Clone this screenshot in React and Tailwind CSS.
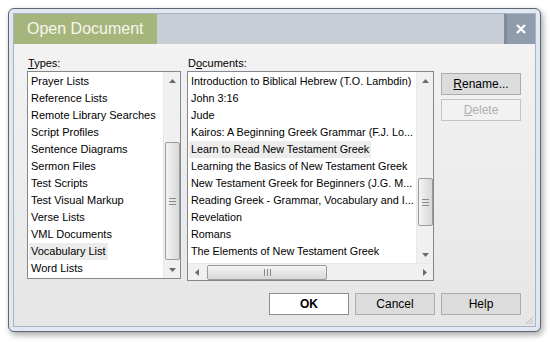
import React from 'react';

const types = [
  'Prayer Lists',
  'Reference Lists',
  'Remote Library Searches',
  'Script Profiles',
  'Sentence Diagrams',
  'Sermon Files',
  'Test Scripts',
  'Test Visual Markup',
  'Verse Lists',
  'VML Documents',
  'Vocabulary List',
  'Word Lists',
];

const documents = [
  'Introduction to Biblical Hebrew (T.O. Lambdin)',
  'John 3:16',
  'Jude',
  'Kairos: A Beginning Greek Grammar (F.J. Lo...',
  'Learn to Read New Testament Greek',
  'Learning the Basics of New Testament Greek',
  'New Testament Greek for Beginners (J.G. M...',
  'Reading Greek - Grammar, Vocabulary and I...',
  'Revelation',
  'Romans',
  'The Elements of New Testament Greek',
];

function Arrow({ dir }) {
  const pts = {
    up: '0,4 3.5,0 7,4',
    down: '0,0 3.5,4 7,0',
    left: '4,0 0,3.5 4,7',
    right: '0,0 4,3.5 0,7',
  }[dir];
  const horiz = dir === 'left' || dir === 'right';
  return (
    <svg width={horiz ? 4 : 7} height={horiz ? 7 : 4} viewBox={horiz ? '0 0 4 7' : '0 0 7 4'}>
      <polygon points={pts} fill="#6b6b6b" />
    </svg>
  );
}

function VScroll({ thumbTop, thumbHeight }) {
  return (
    <div className="relative w-[17px] h-full bg-[#f0f0f0] border-l border-[#e8e8e8] flex flex-col">
      <div className="h-[17px] flex items-center justify-center"><Arrow dir="up" /></div>
      <div className="flex-1" />
      <div className="h-[17px] flex items-center justify-center"><Arrow dir="down" /></div>
      <div
        className="absolute left-[1px] w-[15px] rounded-[2px] border border-[#9c9c9c] bg-gradient-to-r from-[#f4f4f4] to-[#d8d8d8] flex items-center justify-center"
        style={{ top: thumbTop, height: thumbHeight }}
      >
        <div className="flex flex-col gap-[2px]">
          <div className="w-[7px] h-px bg-[#8a8a8a]" />
          <div className="w-[7px] h-px bg-[#8a8a8a]" />
          <div className="w-[7px] h-px bg-[#8a8a8a]" />
        </div>
      </div>
    </div>
  );
}

function HScroll({ thumbLeft, thumbWidth }) {
  return (
    <div className="relative h-[17px] w-full bg-[#f0f0f0] border-t border-[#e8e8e8] flex">
      <div className="w-[17px] flex items-center justify-center"><Arrow dir="left" /></div>
      <div className="flex-1" />
      <div className="w-[17px] flex items-center justify-center"><Arrow dir="right" /></div>
      <div
        className="absolute top-[1px] h-[15px] rounded-[2px] border border-[#9c9c9c] bg-gradient-to-b from-[#f4f4f4] to-[#d8d8d8] flex items-center justify-center"
        style={{ left: thumbLeft, width: thumbWidth }}
      >
        <div className="flex gap-[2px]">
          <div className="w-px h-[7px] bg-[#8a8a8a]" />
          <div className="w-px h-[7px] bg-[#8a8a8a]" />
          <div className="w-px h-[7px] bg-[#8a8a8a]" />
        </div>
      </div>
    </div>
  );
}

function Row({ label, selected }) {
  return (
    <div className="h-[17px] flex items-center pl-[1px]">
      <span className={`px-[2px] leading-[17px] whitespace-nowrap ${selected ? 'bg-[#ececec]' : ''}`}>{label}</span>
    </div>
  );
}

function Button({ children, primary, disabled, className = '' }) {
  return (
    <div
      className={`h-[22px] w-[80px] flex items-center justify-center text-[12px] border ${
        primary
          ? 'bg-white border-[#8c8c8c] text-black'
          : disabled
          ? 'bg-[#f2f2f2] border-[#c4c4c4] text-[#b0b0b0]'
          : 'bg-[#dcdcdc] border-[#acacac] text-black'
      } ${className}`}
    >
      {children}
    </div>
  );
}

export default function App() {
  return (
    <div className="w-[550px] h-[342px] bg-white pl-[8px] pt-[8px] font-['Liberation_Sans',Arial,sans-serif]">
      <div className="w-[533px] h-[324px] rounded-[6px] border border-[#5e6670] bg-[#dfe8f3] p-[4px] shadow-[2px_3px_6px_rgba(0,0,0,0.35)]">
        <div className="relative w-full h-full border border-[#aab4c0] bg-gradient-to-b from-[#f4f4f4] to-[#e6e6e6] flex flex-col">
          {/* title bar */}
          <div className="h-[30px] flex bg-[#c8cdd6]">
            <div className="w-[143px] bg-[#a6b57c] flex items-center pl-[13px] text-[16px] whitespace-nowrap text-[#f6f6ee]">
              Open Document
            </div>
            <div className="flex-1" />
            <div className="w-[3px] bg-[#7f8b99]" />
            <div className="w-[28px] bg-[#8e9cac] flex items-center justify-center">
              <svg width="10" height="10" viewBox="0 0 10 10">
                <path d="M1 1L9 9M9 1L1 9" stroke="white" strokeWidth="2.2" />
              </svg>
            </div>
          </div>

          {/* body */}
          <div className="flex-1 flex flex-col pl-[13px] pt-[12px] text-[11px] text-black">
            <div className="flex">
              {/* types */}
              <div className="w-[154px] flex flex-col">
                <div className="h-[15px] pl-[1px] leading-[15px]"><span className="underline">T</span>ypes:</div>
                <div className="h-[208px] border border-[#828790] bg-white flex">
                  <div className="flex-1 pt-[1px] overflow-hidden">
                    {types.map((t) => (
                      <Row key={t} label={t} selected={t === 'Vocabulary List'} />
                    ))}
                  </div>
                  <VScroll thumbTop={70} thumbHeight={118} />
                </div>
              </div>

              {/* documents */}
              <div className="w-[247px] ml-[6px] flex flex-col">
                <div className="h-[15px] pl-[1px] leading-[15px]">D<span className="underline">o</span>cuments:</div>
                <div className="h-[210px] border border-[#828790] bg-white flex flex-col">
                  <div className="flex-1 flex min-h-0">
                    <div className="flex-1 pt-[1px] overflow-hidden text-[10.8px]">
                      {documents.map((d) => (
                        <Row key={d} label={d} selected={d === 'Learn to Read New Testament Greek'} />
                      ))}
                    </div>
                    <VScroll thumbTop={106} thumbHeight={48} />
                  </div>
                  <HScroll thumbLeft={19} thumbWidth={120} />
                </div>
              </div>

              {/* side buttons */}
              <div className="ml-[7px] pt-[17px] flex flex-col gap-[4px]">
                <Button><span className="underline">R</span>ename...</Button>
                <Button disabled><span className="underline">D</span>elete</Button>
              </div>
            </div>

            {/* bottom buttons */}
            <div className="mt-[12px] flex justify-end gap-[6px] pr-[14px]">
              <Button primary><span className="font-bold">OK</span></Button>
              <Button>Cancel</Button>
              <Button>Help</Button>
            </div>
          </div>

          {/* resize grip */}
          <svg className="absolute right-[1px] bottom-[1px]" width="10" height="10" viewBox="0 0 10 10">
            <path d="M9 2L2 9M9 5L5 9M9 8L8 9" stroke="#b8b8b8" strokeWidth="1" />
          </svg>
        </div>
      </div>
    </div>
  );
}
